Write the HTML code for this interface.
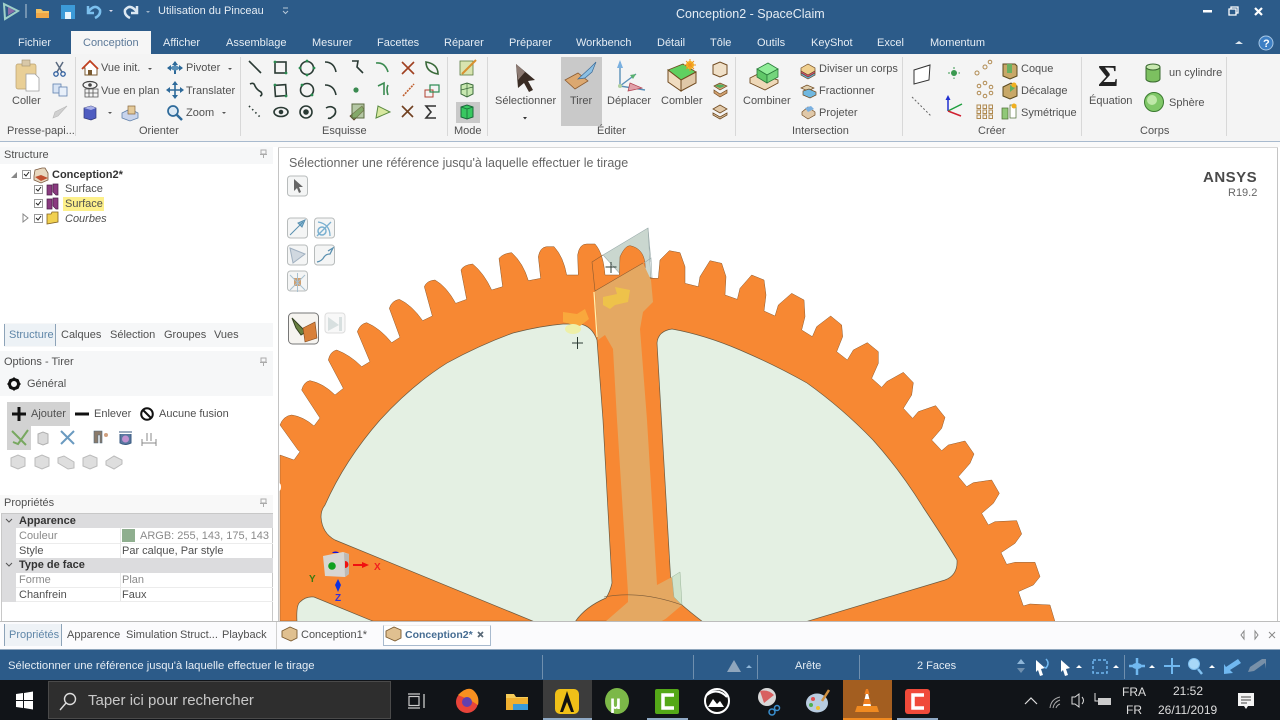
<!DOCTYPE html>
<html lang="fr"><head><meta charset="utf-8"><title>Conception2 - SpaceClaim</title>
<style>
html,body{margin:0;padding:0;background:#fff}
#r{position:relative;width:1280px;height:720px;overflow:hidden;background:#fff;font:11px/14px "Liberation Sans",sans-serif;color:#505050;filter:blur(.35px)}
#r div{position:absolute}
.t{position:absolute;white-space:nowrap;line-height:14px}
.w{color:#e6edf4}
.g{color:#8a8a8a}
.k{color:#333}
svg{position:absolute;left:0;top:0}
</style></head><body><div id="r">
<div style="left:0;top:0;width:1280px;height:54px;background:#2c5b89"></div>
<div style="left:71px;top:31px;width:80px;height:23px;background:#f6f6f6"></div>
<div style="left:0;top:54px;width:1280px;height:87px;background:#f4f4f4"></div>
<div style="left:0;top:141px;width:1280px;height:1px;background:#a8bace"></div>
<div style="left:0;top:142px;width:1280px;height:5px;background:#fafafa"></div>
<div style="left:561px;top:57px;width:41px;height:69px;background:#c9c9c9"></div>
<div style="left:456px;top:102px;width:24px;height:21px;background:#c9c9c9"></div>
<div style="left:75px;top:57px;width:1px;height:79px;background:#d8d8d8"></div>
<div style="left:240px;top:57px;width:1px;height:79px;background:#d8d8d8"></div>
<div style="left:447px;top:57px;width:1px;height:79px;background:#d8d8d8"></div>
<div style="left:487px;top:57px;width:1px;height:79px;background:#d8d8d8"></div>
<div style="left:735px;top:57px;width:1px;height:79px;background:#d8d8d8"></div>
<div style="left:902px;top:57px;width:1px;height:79px;background:#d8d8d8"></div>
<div style="left:1081px;top:57px;width:1px;height:79px;background:#d8d8d8"></div>
<div style="left:1226px;top:57px;width:1px;height:79px;background:#d8d8d8"></div>

<span class="t w" style="left:158px;top:4px">Utilisation du Pinceau</span>
<span class="t w" style="left:676px;top:7px;font-size:12.5px">Conception2 - SpaceClaim</span>
<span class="t w" style="left:18px;top:36px">Fichier</span>
<span class="t" style="left:83px;top:36px;color:#5d7a99">Conception</span>
<span class="t w" style="left:163px;top:36px">Afficher</span>
<span class="t w" style="left:226px;top:36px">Assemblage</span>
<span class="t w" style="left:312px;top:36px">Mesurer</span>
<span class="t w" style="left:377px;top:36px">Facettes</span>
<span class="t w" style="left:444px;top:36px">Réparer</span>
<span class="t w" style="left:509px;top:36px">Préparer</span>
<span class="t w" style="left:576px;top:36px">Workbench</span>
<span class="t w" style="left:657px;top:36px">Détail</span>
<span class="t w" style="left:710px;top:36px">Tôle</span>
<span class="t w" style="left:757px;top:36px">Outils</span>
<span class="t w" style="left:811px;top:36px">KeyShot</span>
<span class="t w" style="left:877px;top:36px">Excel</span>
<span class="t w" style="left:930px;top:36px">Momentum</span>

<span class="t" style="left:12px;top:94px">Coller</span>
<span class="t" style="left:101px;top:61px">Vue init.</span>
<span class="t" style="left:101px;top:84px">Vue en plan</span>
<span class="t" style="left:186px;top:61px">Pivoter</span>
<span class="t" style="left:186px;top:84px">Translater</span>
<span class="t" style="left:186px;top:106px">Zoom</span>
<span class="t" style="left:7px;top:124px">Presse-papi...</span>
<span class="t" style="left:139px;top:124px">Orienter</span>
<span class="t" style="left:322px;top:124px">Esquisse</span>
<span class="t" style="left:454px;top:124px">Mode</span>
<span class="t" style="left:495px;top:94px">Sélectionner</span>
<span class="t" style="left:570px;top:94px">Tirer</span>
<span class="t" style="left:607px;top:94px">Déplacer</span>
<span class="t" style="left:661px;top:94px">Combler</span>
<span class="t" style="left:597px;top:124px">Éditer</span>
<span class="t" style="left:743px;top:94px">Combiner</span>
<span class="t" style="left:819px;top:62px">Diviser un corps</span>
<span class="t" style="left:819px;top:84px">Fractionner</span>
<span class="t" style="left:819px;top:106px">Projeter</span>
<span class="t" style="left:792px;top:124px">Intersection</span>
<span class="t" style="left:1021px;top:62px">Coque</span>
<span class="t" style="left:1021px;top:84px">Décalage</span>
<span class="t" style="left:1021px;top:106px">Symétrique</span>
<span class="t" style="left:978px;top:124px">Créer</span>
<span class="t" style="left:1089px;top:94px">Équation</span>
<span class="t" style="left:1169px;top:66px">un cylindre</span>
<span class="t" style="left:1169px;top:96px">Sphère</span>
<span class="t" style="left:1140px;top:124px">Corps</span>

<!-- left panel -->
<div style="left:0;top:147px;width:273px;height:17px;background:#f6f7f8"></div>
<span class="t" style="left:4px;top:148px">Structure</span>
<span class="t k" style="left:52px;top:168px;font-weight:bold">Conception2*</span>
<div style="left:63px;top:197px;width:41px;height:14px;background:#fdf08a"></div>
<span class="t" style="left:65px;top:182px">Surface</span>
<span class="t" style="left:65px;top:197px">Surface</span>
<span class="t" style="left:65px;top:212px;font-style:italic">Courbes</span>
<div style="left:4px;top:323px;width:269px;height:24px;background:#f6f7f8"></div>
<div style="left:4px;top:324px;width:52px;height:22px;background:#edf2f6;border-left:1px solid #8da3b8;border-right:1px solid #8da3b8;box-sizing:border-box"></div>
<span class="t" style="left:9px;top:328px;color:#5f86a8">Structure</span>
<span class="t" style="left:61px;top:328px">Calques</span>
<span class="t" style="left:110px;top:328px">Sélection</span>
<span class="t" style="left:164px;top:328px">Groupes</span>
<span class="t" style="left:214px;top:328px">Vues</span>
<div style="left:0;top:351px;width:273px;height:45px;background:#f6f7f8"></div>
<span class="t" style="left:4px;top:355px">Options - Tirer</span>
<span class="t" style="left:27px;top:377px">Général</span>
<div style="left:7px;top:402px;width:63px;height:24px;background:#d2d2d2"></div>
<div style="left:7px;top:426px;width:24px;height:24px;background:#d2d2d2"></div>
<span class="t" style="left:31px;top:407px">Ajouter</span>
<span class="t" style="left:94px;top:407px">Enlever</span>
<span class="t" style="left:159px;top:407px">Aucune fusion</span>

<!-- props -->
<div style="left:0;top:495px;width:273px;height:18px;background:#f8f8f8"></div>
<span class="t" style="left:4px;top:496px">Propriétés</span>
<div style="left:1px;top:513px;width:272px;height:110px;border:1px solid #c8c8c8;box-sizing:border-box;background:#fff"></div>
<div style="left:2px;top:514px;width:271px;height:14px;background:#dcdcde"></div>
<div style="left:2px;top:528px;width:14px;height:44px;background:#dcdcde"></div>
<div style="left:2px;top:558px;width:271px;height:15px;background:#dcdcde"></div>
<div style="left:2px;top:573px;width:14px;height:29px;background:#dcdcde"></div>
<div style="left:120px;top:528px;width:1px;height:30px;background:#e8e8e8"></div>
<div style="left:120px;top:573px;width:1px;height:29px;background:#e8e8e8"></div>
<div style="left:16px;top:543px;width:257px;height:1px;background:#ececec"></div>
<div style="left:16px;top:587px;width:257px;height:1px;background:#ececec"></div>
<div style="left:16px;top:601px;width:257px;height:1px;background:#ececec"></div>
<div style="left:122px;top:529px;width:13px;height:13px;background:#8faf8f"></div>
<span class="t k" style="left:19px;top:514px;font-weight:bold">Apparence</span>
<span class="t g" style="left:19px;top:529px">Couleur</span>
<span class="t g" style="left:140px;top:529px">ARGB: 255, 143, 175, 143</span>
<span class="t" style="left:19px;top:544px">Style</span>
<span class="t" style="left:122px;top:544px">Par calque, Par style</span>
<span class="t k" style="left:19px;top:558px;font-weight:bold">Type de face</span>
<span class="t g" style="left:19px;top:573px">Forme</span>
<span class="t g" style="left:122px;top:573px">Plan</span>
<span class="t" style="left:19px;top:588px">Chanfrein</span>
<span class="t" style="left:122px;top:588px">Faux</span>

<!-- viewport -->
<div style="left:278px;top:147px;width:1px;height:474px;background:#c4c4c4"></div>
<div style="left:1277px;top:147px;width:1px;height:474px;background:#c4c4c4"></div>
<div style="left:278px;top:147px;width:1000px;height:1px;background:#d8d8d8"></div>
<div style="left:279px;top:148px;width:998px;height:473px;overflow:hidden;background:#fff">
<svg width="998" height="473" viewBox="279 148 998 473">
<polygon points="603,255 648,228 651,280 622,276" fill="#cad7cf" stroke="#9aa" stroke-width=".6"/>
<g transform="translate(280,220) scale(.33333)" fill="#f78833" stroke="#8a5a30" stroke-width="1.5" stroke-linejoin="round">
<path d="M0,705 L42,720 L60,695 L54,690 L0,615 Q10,588 35,585 Q70,590 102,618 L120,594 L114,585 L65,510 Q72,485 90,482 Q130,490 165,525 L190,505 L145,420 Q150,395 170,390 Q210,405 245,440 L270,425 L232,335 Q240,312 260,308 Q300,325 335,368 L360,352 L328,265 Q335,242 358,238 Q395,255 428,302 L457,288 L433,200 Q440,182 465,180 Q500,200 527,250 L560,238 L543,150 Q550,135 578,132 Q612,160 635,210 L668,200 L657,115 Q670,100 695,98 Q730,130 745,182 L782,175 L775,110 Q780,82 800,80 L822,80 Q850,110 860,165 L895,165 L893,105 Q898,72 920,72 L945,72 Q970,100 975,165 L1018,165 L1020,110 Q1035,77 1050,77 Q1090,85 1095,130 L1097,170 L1135,178 L1135,1203 L0,1203 Z"/>
</g>
<g transform="translate(640,230) scale(.33333)" fill="#f78833" stroke="#8a5a30" stroke-width="1.5" stroke-linejoin="round">
<path d="M0,145 L55,145 L60,90 L88,62 L120,68 L135,110 L135,160 L175,170 L180,140 L210,92 L245,100 L258,140 L255,195 L292,208 L300,175 L335,135 L372,150 L378,195 L372,243 L405,258 L415,225 L455,190 L492,210 L495,260 L485,300 L517,320 L530,290 L572,258 L605,285 L608,320 L590,365 L622,390 L640,360 L682,338 L715,365 L715,400 L695,445 L725,472 L740,455 L790,427 L820,458 L815,495 L790,535 L818,565 L835,545 L887,527 L915,562 L905,595 L875,630 L905,662 L925,645 L975,633 L1002,672 L990,700 L955,740 L980,770 L1000,758 L1055,750 L1078,790 L1060,820 L1025,850 L1045,885 L1065,875 L1130,872 L1145,912 L1125,940 L1083,968 L1100,1003 L1125,997 L1185,997 L1200,1040 L1180,1065 L1135,1085 L1150,1128 L1170,1122 L1230,1125 L1245,1175 L0,1175 Z"/>
</g>
<rect x="630" y="290" width="40" height="331" fill="#f78833"/>
<ellipse cx="279" cy="487" rx="2" ry="4" fill="#fff"/>
<g fill="#e4f0e3" stroke="#6b5a40" stroke-width=".7">
<path d="M597,340 L603,420 L612,583 Q610,592 606,598 Q585,607 575,622 L535,622 L335,540 Q322,533 321,517 Q321,510 325,505 Q345,460 380,420 Q412,385 447,363 Q480,345 513,333 Q540,326 563,324 L580,324 Q592,326 597,340 Z"/>
<path d="M657,343 Q658,331 672,329 Q705,335 740,350 Q775,365 807,383 Q842,408 873,440 Q900,470 923,507 Q945,540 957,560 Q958,575 945,580 L805,622 L703,622 Q690,612 682,605 Q672,597 671,585 Z"/>
<path d="M297,622 Q296,605 300,602 Q306,596 314,597 L375,622 Z"/>
</g>
<polygon points="595,291 643,263 651,280 653,302 643,312 640,329 647,420 657,585 672,577 682,605 662,622 605,622 628,602 628,593 617,420 613,349 605,335 598,340" fill="#e4a862"/>
<polygon points="672,577 680,572 682,605 674,597" fill="#cfe3cb" stroke="#9ab49a" stroke-width=".5"/>
<polygon points="660,622 682,610 682,622" fill="#f78833"/>
<path d="M603,255 L592,262 L595,291 L643,263" fill="none" stroke="#8a5a30" stroke-width=".6"/>
<path d="M648,228 L651,262 M644,263 L651,258 L652,278" fill="none" stroke="#9aa" stroke-width=".6"/>
<path d="M594,292 L597,337" stroke="#fff2b0" stroke-width="1.2"/>
<path d="M604,597 Q640,590 682,605" fill="none" stroke="#7a5a38" stroke-width=".6"/>
<polygon points="603,297 617,294 615,287 630,290 628,302 615,305 610,309 603,305" fill="#eec24a"/>
<polygon points="563,312 577,314 585,309 589,319 580,326 570,324 563,322" fill="#f9a83c"/>
<ellipse cx="573" cy="329" rx="8" ry="5" fill="#eef0a8"/>
<path d="M611,262 V273 M605.500,267 H616.500 M577.500,337 V349 M572,343 H583" stroke="#2c3c34" stroke-width="1"/>
<!-- gizmo -->
<polygon points="323,556 343,552 349,554 349,574 345,577 325,576" fill="#d8d6d2"/>
<polygon points="344,553 349,554 349,574 345,577" fill="#bdb9b4"/>
<circle cx="332" cy="566" r="3.800" fill="#10a020"/>
<path d="M332,553 a4,3 0 0 1 7,0 Z" fill="#1010e0"/>
<path d="M345,561 a3.500,3.500 0 0 1 0,7 Z" fill="#f01010"/>
<path d="M353,564 H362 V562 L369,565 L362,568 V566 H353 Z" fill="#f01010"/>
<path d="M338,579 L341,585 L338,592 L335,585 Z" fill="#1030e0"/>
<text x="374" y="570" font-family="Liberation Sans" font-weight="bold" font-size="10" fill="#f02020">X</text>
<text x="309" y="582" font-family="Liberation Sans" font-weight="bold" font-size="10" fill="#3a7a10">Y</text>
<text x="335" y="601" font-family="Liberation Sans" font-weight="bold" font-size="10" fill="#3030e0">Z</text>
</svg>
</div>
<span class="t" style="left:289px;top:156px;font-size:12.500px;color:#666">Sélectionner une référence jusqu'à laquelle effectuer le tirage</span>
<span class="t" style="left:1203px;top:171px;font-size:15px;font-weight:bold;letter-spacing:.5px;color:#4a4a4a">ANSYS</span>
<span class="t" style="left:1228px;top:186px;font-size:11px;color:#666">R19.2</span>

<!-- bottom tabs -->
<div style="left:0;top:621px;width:1280px;height:28px;background:#fbfbfd"></div>
<div style="left:0;top:621px;width:1280px;height:1px;background:#bdbdbd"></div>
<div style="left:4px;top:624px;width:58px;height:22px;background:#eef2f6;border-left:1px solid #8da3b8;border-right:1px solid #8da3b8;box-sizing:border-box"></div>
<span class="t" style="left:9px;top:628px;color:#5f86a8">Propriétés</span>
<span class="t" style="left:67px;top:628px">Apparence</span>
<span class="t" style="left:126px;top:628px">Simulation</span>
<span class="t" style="left:180px;top:628px">Struct...</span>
<span class="t" style="left:222px;top:628px">Playback</span>
<div style="left:276px;top:622px;width:1px;height:27px;background:#d0d0d0"></div>
<div style="left:383px;top:625px;width:108px;height:21px;background:#fff;border:1px solid #a8bace;border-top:1px solid #eee;box-sizing:border-box"></div>
<span class="t" style="left:301px;top:628px">Conception1*</span>
<span class="t" style="left:405px;top:628px;color:#456c92;font-weight:bold;font-size:10.500px">Conception2*</span>

<!-- status -->
<div style="left:0;top:649px;width:1280px;height:31px;background:#2c5b89"></div>
<div style="left:0;top:649px;width:1280px;height:1px;background:#8fa6bd"></div>
<span class="t w" style="left:8px;top:659px;font-size:11.300px">Sélectionner une référence jusqu'à laquelle effectuer le tirage</span>
<span class="t w" style="left:795px;top:659px">Arête</span>
<span class="t w" style="left:917px;top:659px">2 Faces</span>
<div style="left:542px;top:655px;width:1px;height:24px;background:#6f8fae"></div>
<div style="left:693px;top:655px;width:1px;height:24px;background:#6f8fae"></div>
<div style="left:757px;top:655px;width:1px;height:24px;background:#6f8fae"></div>
<div style="left:859px;top:655px;width:1px;height:24px;background:#6f8fae"></div>
<div style="left:1124px;top:655px;width:1px;height:24px;background:#6f8fae"></div>

<!-- taskbar -->
<div style="left:0;top:680px;width:1280px;height:40px;background:#111418"></div>
<div style="left:48px;top:681px;width:343px;height:38px;background:#2e2e2e;border:1px solid #4a4a4a;box-sizing:border-box"></div>
<div style="left:543px;top:680px;width:49px;height:40px;background:#3c3c3c"></div>
<div style="left:843px;top:680px;width:49px;height:40px;background:#a35e20"></div>
<div style="left:543px;top:718px;width:49px;height:2px;background:#8fa9c4"></div>
<div style="left:647px;top:718px;width:41px;height:2px;background:#8fa9c4"></div>
<div style="left:843px;top:718px;width:49px;height:2px;background:#f08a20"></div>
<div style="left:897px;top:718px;width:41px;height:2px;background:#8fa9c4"></div>
<span class="t" style="left:88px;top:694px;font-size:15px;color:#c8c8c8">Taper ici pour rechercher</span>
<span class="t" style="left:1122px;top:685px;font-size:12px;color:#ddd">FRA</span>
<span class="t" style="left:1126px;top:703px;font-size:12px;color:#ddd">FR</span>
<span class="t" style="left:1173px;top:684px;font-size:12px;color:#ddd">21:52</span>
<span class="t" style="left:1158px;top:703px;font-size:12px;color:#ddd">26/11/2019</span>

<svg width="1280" height="720" viewBox="0 0 1280 720">
<!-- quick access -->
<path d="M4,4 L18,11 L5,19 Z" fill="none" stroke="#9fd0c8" stroke-width="2"/><path d="M8,7 L15,11 L8,15 Z" fill="#8a6aa8"/>
<path d="M26,4 V18" stroke="#b8c8d8"/>
<path d="M36,9 h5 l2,2 h6 v2 h-13 Z" fill="#f3c060"/><path d="M36,13 h13 v5 h-13 Z" fill="#f0a848"/>
<rect x="61" y="5" width="14" height="14" fill="#3c9ad8"/><rect x="65" y="12" width="6" height="7" fill="#e8f4fc"/>
<path d="M88,6 V13 H94 M88,12 Q95,3 100,10 Q101,15 95,18" fill="none" stroke="#7cc0ee" stroke-width="2.500"/>
<path d="M109,10 l4,0 l-2,2 Z" fill="#dde"/>
<path d="M137,6 V13 H131 M137,12 Q130,3 125,10 Q124,15 130,18" fill="none" stroke="#dce8f2" stroke-width="2.500"/>
<path d="M146,11 l4,0 l-2,2 Z" fill="#9fb4c8"/>
<path d="M283,8 h5 M283,11 l2.500,2.500 l2.500,-2.500" fill="none" stroke="#b8c8d8"/>
<!-- window -->
<rect x="1203" y="10" width="9" height="2.500" fill="#fff"/>
<path d="M1229,9 h7 v6 h-7 Z M1231,9 v-2 h7 v6 h-2" fill="none" stroke="#fff" stroke-width="1.300"/>
<path d="M1255,8 l7,7 m0,-7 l-7,7" stroke="#fff" stroke-width="2.200"/>
<path d="M1235,44 l4,-3 l4,3 Z" fill="#dde6ee"/>
<circle cx="1266" cy="43" r="7" fill="#3d7fc4" stroke="#a8c8e6"/>
<text x="1263" y="47" font-family="Liberation Sans" font-weight="bold" font-size="11" fill="#fff">?</text>
<!-- coller -->
<rect x="16" y="64" width="20" height="25" rx="2" fill="#e9cf96" stroke="#b8a070" stroke-width=".7"/>
<rect x="22" y="60" width="8" height="6" fill="#d8c8a8" stroke="#a09070" stroke-width=".6"/>
<path d="M26,74 h9 l4,4 v13 h-13 Z" fill="#fff" stroke="#a0a0a0" stroke-width=".8"/>
<path d="M56,62 L62,72 M63,62 L57,72" stroke="#5a6a80" stroke-width="1.500"/><circle cx="56" cy="74" r="2.200" fill="none" stroke="#3060a0" stroke-width="1.300"/><circle cx="63" cy="74" r="2.200" fill="none" stroke="#3060a0" stroke-width="1.300"/>
<rect x="53" y="84" width="8" height="9" fill="#d8e4f4" stroke="#6080b0" stroke-width=".8"/><rect x="59" y="87" width="8" height="9" fill="#e8f0fa" stroke="#6080b0" stroke-width=".8"/>
<path d="M67,106 L58,116 L53,118 L55,112 Z" fill="#d0d0d0" stroke="#b8b8b8" stroke-width=".6"/>
<!-- orienter -->
<path d="M83,68 L90,61 L97,68 V75 H85 V68 Z" fill="#fff" stroke="#7a5a30" stroke-width="1"/><path d="M82,69 L90,61 L98,69" fill="none" stroke="#c04020" stroke-width="1.800"/><rect x="88" y="70" width="4" height="5" fill="#7a5a30"/>
<path d="M148,68 l4,0 l-2,2 Z M228,68 l4,0 l-2,2 Z" fill="#555"/>
<ellipse cx="90" cy="85" rx="7" ry="3.500" fill="none" stroke="#444" stroke-width="1.200"/><circle cx="90" cy="85" r="1.800" fill="#444"/>
<path d="M85,89 h13 v8 h-13 Z M85,93 h13 M89,89 v8 M93,89 v8" fill="none" stroke="#555" stroke-width=".8"/>
<path d="M84,108 l7,-2 l5,2 v10 l-5,2 l-7,-2 Z" fill="#4e5cc0" stroke="#303878" stroke-width=".7"/><path d="M84,108 l7,2 l5,-2 l-5,-2 Z" fill="#a8b0e8"/>
<path d="M108,112 l4,0 l-2,2 Z M222,112 l4,0 l-2,2 Z" fill="#555"/>
<path d="M122,113 l8,-4 l8,4 v5 l-8,3 l-8,-3 Z" fill="#c8d4ec" stroke="#6080a8" stroke-width=".8"/><path d="M128,106 h7 v8 h-7 Z" fill="#e4ca9a" stroke="#8a6a40" stroke-width=".7"/>
<g fill="none" stroke="#2e6a9a" stroke-width="2"><path d="M168,68 H182 M175,62 V74"/></g><path d="M167,68 l4,-3 v6 Z M183,68 l-4,-3 v6 Z M175,61 l-3,4 h6 Z" fill="#2e6a9a"/><ellipse cx="175" cy="68" rx="4" ry="2.500" fill="#5a90b8"/>
<g fill="none" stroke="#2e6a9a" stroke-width="1.600"><path d="M168,90 H182 M175,83 V97"/></g><path d="M166,90 l4,-3 v6 Z M184,90 l-4,-3 v6 Z M175,81 l-3,4 h6 Z M175,99 l-3,-4 h6 Z" fill="#2e6a9a"/>
<circle cx="173" cy="111" r="5" fill="#dbe9f5" stroke="#2e6a9a" stroke-width="1.700"/><path d="M177,115 L182,120" stroke="#2e6a9a" stroke-width="2.500"/>
<!-- esquisse grid -->
<g fill="none" stroke="#2a3a34" stroke-width="1.600">
<path d="M249,61 L261,73"/><rect x="275" y="62" width="11" height="11"/><circle cx="307" cy="68" r="6.500"/><path d="M325,62 q9,0 11,10"/><path d="M352,61 h6 l-1,6 l6,6"/><path d="M376,63 q9,-1 12,9" stroke="#3a8a50"/><path d="M402,62 l12,12 M414,62 l-12,12" stroke="#a04020"/><path d="M426,62 q12,2 12,12 q-12,-2 -12,-12 Z" stroke="#3a6a3a"/>
<path d="M250,84 q4,-2 5,2 q2,4 6,6 q2,3 -1,4"/><rect x="275" y="85" width="11" height="11" transform="rotate(-4 280 90)"/><circle cx="307" cy="90" r="6.500"/><path d="M325,85 q9,0 11,10"/><path d="M378,86 l6,-3 v12 M388,85 q-2,4 0,10" stroke="#3a8a50"/><path d="M403,96 L414,84" stroke="#c06030" stroke-dasharray="2 1"/><rect x="425" y="90" width="8" height="7" stroke="#b04030" stroke-width="1"/><rect x="430" y="85" width="9" height="7" stroke="#2a8a50" stroke-width="1.200"/>
<path d="M249,106 L261,118" stroke-dasharray="1.500 3"/><ellipse cx="281" cy="112" rx="7" ry="4.500"/><circle cx="281" cy="112" r="1.500" fill="#2a3a34"/><circle cx="306" cy="112" r="6"/><circle cx="306" cy="112" r="2" fill="#2a3a34"/><path d="M326,108 q5,-3 9,1 q2,5 -3,8 q-2,2 -4,1"/>
<path d="M402,106 l11,11 M413,106 l-11,11" stroke="#704020"/><path d="M436,106 h-10 l5,6 l-5,6 h10" stroke="#333"/>
</g>
<circle cx="356" cy="90" r="2.600" fill="#3a8a50"/>
<path d="M350,116 L362,106 L364,110 L354,120 Z" fill="#7aa860" stroke="#5a3a20" stroke-width=".8"/><path d="M352,104 h12 v14 h-12 Z" fill="#8aaa70" fill-opacity=".6" stroke="#5a6a40"/>
<path d="M376,118 L390,112 L378,106 Z" fill="#d8e8a0" stroke="#5a8a40"/>
<g fill="#2a8a50"><circle cx="307" cy="61" r="1.400"/><circle cx="307" cy="75" r="1.400"/><circle cx="300" cy="68" r="1.400"/><circle cx="314" cy="68" r="1.400"/><circle cx="302" cy="85" r="1.400"/><circle cx="312" cy="95" r="1.400"/><circle cx="275" cy="62" r="1.400"/><circle cx="286" cy="73" r="1.400"/><circle cx="275" cy="85" r="1.400"/><circle cx="286" cy="96" r="1.400"/></g>
<!-- mode -->
<rect x="460" y="61" width="13" height="14" fill="#d8e4b0" stroke="#5a7a40" stroke-width=".8"/><path d="M462,74 L476,60" stroke="#d89030" stroke-width="2"/>
<path d="M461,85 l6,-2 l6,2 v9 l-6,3 l-6,-3 Z" fill="#c8e8b0" stroke="#3a6a3a" stroke-width="1"/><path d="M467,83 v14 M461,90 l12,-3" stroke="#3a6a3a" stroke-width=".7"/>
<path d="M461,107 l6,-2 l6,2 v10 l-6,2 l-6,-2 Z" fill="#38c860" stroke="#1a6a3a" stroke-width="1"/><path d="M461,107 l6,2 l6,-2 M467,109 v10" fill="none" stroke="#1a6a3a" stroke-width=".8"/>
<!-- select -->
<path d="M516,64 L535,80 L528,81 L533,90 L529,92 L524,83 L518,88 Z" fill="#3a2c24"/><path d="M516,64 L525,72 L518,80 Z" fill="#8c7a72"/>
<path d="M523,117 l4,0 l-2,2.500 Z" fill="#333"/>
<!-- tirer -->
<path d="M565,80 L578,73 L588,81 L575,89 Z" fill="#dca870" stroke="#8a5a30" stroke-width=".8"/>
<path d="M578,79 L590,68 L596,62 L592,72 L585,78 Z" fill="#8cc0e4" stroke="#3a6a98" stroke-width=".7"/>
<!-- deplacer -->
<path d="M620,62 V86 M620,86 L645,90 M620,86 L636,74" fill="none" stroke="#5a90b8" stroke-width="1.400"/><path d="M620,60 l-3,8 h6 Z" fill="#7ab0e0"/><path d="M636,74 l-6,1 l3,4 Z" fill="#5ab070"/><path d="M630,83 L642,88 L628,91 Z" fill="#e0a0a8" stroke="#b04050" stroke-width=".7"/><circle cx="620" cy="86" r="2" fill="#b0d0a0"/>
<!-- combler -->
<path d="M668,70 L683,64 L696,72 L681,80 Z" fill="#60d060" stroke="#704a20" stroke-width=".8"/><path d="M668,70 L681,80 V91 L668,82 Z" fill="#f0dcc0" stroke="#704a20"/><path d="M681,80 L696,72 V83 L681,91 Z" fill="#e0c8a8" stroke="#704a20"/>
<circle cx="690" cy="65" r="4" fill="#f8c020"/><path d="M690,59 v12 M684,65 h12 M686,61 l8,8 M694,61 l-8,8" stroke="#f09020"/>
<path d="M713,65 l7,-3 l7,3 v9 l-7,3 l-7,-3 Z" fill="#f0e0c8" stroke="#704a20"/><path d="M714,86 l6,-3 l7,3 l-7,4 Z M714,90 l6,4 l7,-4 v3 l-7,4 l-6,-4 Z" fill="#d0a070" stroke="#704a20" stroke-width=".7"/><path d="M715,86 q5,-3 10,0 l-5,2 Z" fill="#50b060"/><path d="M713,109 l7,-4 l7,4 l-7,4 Z M713,113 l7,4 l7,-4 v2 l-7,4 l-7,-4 Z" fill="#e0c8a8" stroke="#704a20" stroke-width=".8"/>
<!-- combiner -->
<path d="M750,78 L758,74 L778,80 V83 L765,90 L750,83 Z" fill="#eed8b8" stroke="#704a20" stroke-width=".9"/>
<path d="M757,69 L768,63 L778,69 L767,75 Z" fill="#90ec98" stroke="#2a7a3a" stroke-width=".8"/><path d="M757,69 V77 L767,83 V75 Z" fill="#60c868" stroke="#2a7a3a" stroke-width=".8"/><path d="M767,75 V83 L778,77 V69 Z" fill="#74d47c" stroke="#2a7a3a" stroke-width=".8"/>
<g stroke="#704a20" stroke-width=".7"><path d="M801,68 l7,-4 l7,4 v3 l-7,4 l-7,-4 Z" fill="#f0d090"/><path d="M801,71 l7,4 l7,-4 v2 l-7,4 l-7,-4 Z" fill="#d05080"/><path d="M801,73 l7,4 l7,-4 v2 l-7,4 l-7,-4 Z" fill="#60b0e0"/><path d="M801,88 l6,-3 l7,3 l-6,3 Z" fill="#e0d0b0"/><path d="M803,91 l6,-2 l7,3 v3 l-6,3 l-7,-3 Z" fill="#70b8e0"/><path d="M802,112 l6,-5 l7,5 v3 l-7,4 l-6,-4 Z" fill="#e0c8a8"/></g>
<path d="M805,108 l6,-2 l3,3 l-6,3 Z" fill="#7ab0e0"/>
<!-- creer -->
<path d="M914,70 L930,65 L929,80 L914,84 Z" fill="#fff" stroke="#333" stroke-width="1"/>
<circle cx="954" cy="73" r="3" fill="#3a9a50"/><path d="M954,67 v12 M948,73 h12" stroke="#3a9a50" stroke-dasharray="2 1.500"/>
<path d="M912,97 L931,116" stroke="#666" stroke-dasharray="2 2"/>
<path d="M948,111 V98" stroke="#2030d0" stroke-width="1.500"/><path d="M948,95 l-2.500,5 h5 Z" fill="#2030d0"/><path d="M948,111 L962,104" stroke="#20a040" stroke-width="1.500"/><path d="M948,111 L961,116" stroke="#d02030" stroke-width="1.500"/>
<g fill="none" stroke="#b08a50" stroke-width="1"><circle cx="977" cy="73" r="2"/><circle cx="985" cy="67" r="2"/><circle cx="990" cy="62" r="1.800"/><circle cx="979" cy="86" r="1.800"/><circle cx="985" cy="83" r="1.800"/><circle cx="991" cy="87" r="1.800"/><circle cx="979" cy="93" r="1.800"/><circle cx="991" cy="93" r="1.800"/><circle cx="985" cy="96" r="1.800"/>
<rect x="977" y="105" width="3.500" height="3.500"/><rect x="983" y="105" width="3.500" height="3.500"/><rect x="989" y="105" width="3.500" height="3.500"/><rect x="977" y="110" width="3.500" height="3.500"/><rect x="983" y="110" width="3.500" height="3.500"/><rect x="989" y="110" width="3.500" height="3.500"/><rect x="977" y="115" width="3.500" height="3.500"/><rect x="983" y="115" width="3.500" height="3.500"/><rect x="989" y="115" width="3.500" height="3.500"/></g>
<path d="M1003,64 h12 l2,2 v10 l-7,3 l-7,-3 Z" fill="#c8a868" stroke="#5a4a20"/><rect x="1007" y="64" width="5" height="9" fill="#6ab060"/>
<path d="M1003,87 l8,-4 l6,3 v10 l-7,3 l-7,-3 Z" fill="#c8a868" stroke="#5a4a20"/><path d="M1010,85 l5,3 l-5,4 Z" fill="#60b060"/><circle cx="1014" cy="85" r="2.500" fill="#f0b020"/>
<rect x="1002" y="108" width="6" height="11" fill="#90c878" stroke="#4a6a30" stroke-width=".7"/><rect x="1010" y="105" width="6" height="13" fill="#fff" stroke="#4a6a30" stroke-width=".7"/><circle cx="1014" cy="106" r="2.500" fill="#f0b020"/>
<!-- corps -->
<text x="1098" y="86" font-family="Liberation Serif" font-weight="bold" font-size="31" fill="#222">Σ</text>
<path d="M1146,67 V79 a7,3 0 0 0 14,0 V67" fill="#7cc060" stroke="#3a6a30"/><ellipse cx="1153" cy="67" rx="7" ry="3" fill="#c8e8b0" stroke="#3a6a30"/>
<circle cx="1154" cy="102" r="9.500" fill="#80c868" stroke="#3a7a30"/><circle cx="1152" cy="100" r="5" fill="#bfe8a8"/>

<!-- viewport tools -->
<g fill="#f4f5f5" stroke="#b8bcbc"><rect x="287.500" y="176" width="20" height="20" rx="3"/><rect x="287.500" y="218" width="20" height="20" rx="3"/><rect x="314.500" y="218" width="20" height="20" rx="3"/><rect x="287.500" y="245" width="20" height="20" rx="3"/><rect x="314.500" y="245" width="20" height="20" rx="3"/><rect x="287.500" y="271" width="20" height="20" rx="3"/><rect x="288.500" y="313" width="30" height="31" rx="4" fill="#f6f4f0" stroke="#777"/><rect x="325" y="313" width="20" height="20" rx="3" fill="#f8f8f8" stroke="#ddd"/></g>
<path d="M294,179 L303,187 L299,187 L301,192 L299,193 L297,188 L294,191 Z" fill="#666"/>
<path d="M290,235 L303,222 M305,220 l-7,3 l4,4 Z" stroke="#5a90b0" fill="#88bcd8"/>
<circle cx="322" cy="231" r="4" fill="none" stroke="#7ab0d0" stroke-width="1.500"/><path d="M317,236 L331,222 M318,222 q12,2 12,14" fill="none" stroke="#7ab0d0" stroke-width="1.300"/>
<path d="M290,248 L305,254 L293,263 Z" fill="#d0d8e0" stroke="#a0b0c0"/>
<path d="M317,262 q5,-1 7,-5 q2,-3 6,-3 l3,-6 l-5,3" fill="none" stroke="#5a90b0" stroke-width="1.300"/>
<rect x="294" y="278" width="7" height="8" fill="#d0a070"/><path d="M290,275 L305,290 M305,275 L290,290 M297.500,273 V292" stroke="#a8c0d0"/>
<path d="M292,318 L306,332 L301,335 L296,328 Z" fill="#6a8040" stroke="#334020"/><path d="M303,328 L315,322 L317,338 L305,342 Z" fill="#d8803a" stroke="#804a20" stroke-width=".6"/>
<path d="M328,317 L339,325 L328,331 Z M339,317 h3 v14 h-3 Z" fill="#d8e0e0"/>

<!-- tree -->
<path d="M11,178 L17,172 V178 Z" fill="#888"/>
<path d="M23,214 L28,218 L23,222 Z" fill="none" stroke="#888"/>
<g fill="#fff" stroke="#999"><rect x="22.500" y="170.500" width="8" height="8"/><rect x="34.500" y="185.500" width="8" height="8"/><rect x="34.500" y="199.500" width="8" height="8"/><rect x="34.500" y="214.500" width="8" height="8"/></g>
<g fill="none" stroke="#222" stroke-width="1"><path d="M24,174 l2,2 l3,-4 M36,189 l2,2 l3,-4 M36,203 l2,2 l3,-4 M36,218 l2,2 l3,-4"/></g>
<path d="M35,170 l7,-2 h3 l3,5 v7 l-7,3 l-7,-3 v-4 Z" fill="#e8d8c0" stroke="#7a5a40" stroke-width=".8"/><path d="M35,177 l6,-2 l7,3 l-7,3 Z" fill="#c05030"/>
<path d="M47,185 h5 v10 h-5 Z M53,184 h5 v11 h-2 l-3,-3 Z" fill="#8a3a80" stroke="#4a2048" stroke-width=".7"/>
<path d="M47,199 h5 v10 h-5 Z M53,198 h5 v11 h-2 l-3,-3 Z" fill="#8a3a80" stroke="#4a2048" stroke-width=".7"/>
<path d="M47,214 h4 l1,-2 h6 v10 l-11,2 Z" fill="#f0d050" stroke="#806020" stroke-width=".8"/>
<g fill="none" stroke="#aaa"><path d="M261,150 h5 v4 h-5 Z M263.500,154 v4 M260,154.500 h7 M261,358 h5 v4 h-5 Z M263.500,362 v4 M260,362.500 h7 M261,499 h5 v4 h-5 Z M263.500,503 v4 M260,503.500 h7"/></g>
<!-- options icons -->
<circle cx="14" cy="384" r="4.500" fill="none" stroke="#111" stroke-width="3"/><g stroke="#111" stroke-width="2"><path d="M14,377.500 v2 M14,388.500 v2 M7.500,384 h2 M18.500,384 h2 M9.500,379.500 l1.500,1.500 M17,387 l1.500,1.500 M18.500,379.500 l-1.500,1.500 M11,387 l-1.500,1.500"/></g>
<path d="M12,414 h14 M19,407 v14" stroke="#111" stroke-width="3"/>
<rect x="75" y="412.500" width="14" height="3" fill="#111"/>
<circle cx="147" cy="414" r="5.800" fill="none" stroke="#111" stroke-width="2"/><path d="M143,410 L151,418" stroke="#111" stroke-width="2"/>
<path d="M12,431 L26,445 M28,430 L18,444 L13,442" fill="none" stroke="#78a860" stroke-width="2"/>
<path d="M38,434 l5,-2 l5,2 v9 l-5,2 l-5,-2 Z" fill="#dadada" stroke="#b0b0b0"/>
<path d="M61,444 L74,431 M61,431 L74,444" stroke="#6a9ac0" stroke-width="2"/>
<path d="M94,431 h8 v12 h-2 v-8 h-2 v8 h-4 Z" fill="#8a7a6a" stroke="#506a80" stroke-width=".6"/><circle cx="106" cy="435" r="2" fill="#d0a080"/>
<path d="M119,432 h13 M120,434 v9 q5,3 11,0 v-9" fill="#5a78a0" stroke="#3a5a80"/><circle cx="125.500" cy="439" r="3.500" fill="#c090d0"/>
<path d="M142,443 h14 M142,439 v7 M156,439 v7 M147,433 v8 M151,433 v8" stroke="#888" fill="none"/>
<g fill="#dedede" stroke="#bbb"><path d="M11,458 l7,-3 l7,3 v8 l-7,3 l-7,-3 Z"/><path d="M35,458 l7,-3 l7,3 v8 l-7,3 l-7,-3 Z"/><path d="M58,458 l6,-2 l10,6 v6 l-6,1 l-10,-6 Z"/><path d="M83,458 l7,-3 l7,3 v8 l-7,3 l-7,-3 Z"/><path d="M106,461 l8,-5 l8,4 v4 l-8,5 l-8,-4 Z"/></g>
<!-- prop chevrons -->
<path d="M6,519 l3,3 l3,-3 M6,563 l3,3 l3,-3" fill="none" stroke="#555"/>
<!-- doc tab icons -->
<g stroke="#7a5a30" stroke-width=".9"><path d="M282,631 l8,-4 l7,3 v8 l-6,3 l-9,-4 Z" fill="#e0c090"/><path d="M386,631 l8,-4 l7,3 v8 l-6,3 l-9,-4 Z" fill="#e0c090"/></g>
<path d="M478,632 l5,5 m0,-5 l-5,5" stroke="#5a6a78" stroke-width="1.700"/>
<path d="M1244,631 l-3,4 l3,4 Z M1255,631 l3,4 l-3,4 Z" fill="none" stroke="#888"/>
<path d="M1269,632 l6,6 m0,-6 l-6,6" stroke="#888"/>
<!-- status icons -->
<path d="M734,660 L741,672 H727 Z" fill="#8fa6bd"/><path d="M746,668 l3,-3 l3,3 Z M1017,664 l4,-5 l4,5 Z" fill="#8fb6d8"/><path d="M1017,668 l4,5 l4,-5 Z" fill="#6f8fae"/>
<path d="M1036,660 L1045,668 L1041,669 L1043,675 L1040,676 L1038,670 L1036,672 Z" fill="#fff"/><path d="M1046,659 q4,4 0,9 l-2,-1" fill="none" stroke="#70b8f0" stroke-width="1.500"/>
<path d="M1061,660 L1070,668 L1066,669 L1068,675 L1065,676 L1063,670 L1061,672 Z" fill="#fff"/>
<path d="M1076,668 l3,-3 l3,3 Z M1113,668 l3,-3 l3,3 Z M1149,668 l3,-3 l3,3 Z M1209,668 l3,-3 l3,3 Z" fill="#fff"/>
<rect x="1093" y="660" width="14" height="13" fill="none" stroke="#70b8f0" stroke-width="1.500" stroke-dasharray="3 2"/>
<path d="M1137,658 V675 M1129,666 H1145" stroke="#70b8f0" stroke-width="2.500"/><ellipse cx="1137" cy="666" rx="5" ry="3" fill="#70b8f0"/>
<path d="M1172,658 V674 M1164,666 H1180" stroke="#70b8f0" stroke-width="2"/>
<circle cx="1194" cy="664" r="5.500" fill="#a8d8f8" stroke="#80c0f0"/><path d="M1198,669 l4,5" stroke="#80c0f0" stroke-width="2.500"/>
<path d="M1238,659 L1226,667 L1224,664 L1224,674 L1233,673 L1230,670 L1241,663 Z" fill="#70b8f0"/>
<path d="M1262,659 L1250,667 L1248,672 L1254,671 L1265,663 L1266,669 V659 Z" fill="#7890a8"/>
<!-- taskbar icons -->
<path d="M16,694 l7,-1 v7 h-7 Z M24,693 l9,-1.500 v8.500 h-9 Z M16,701 h7 v7 l-7,-1 Z M24,701 h9 v8.500 l-9,-1.500 Z" fill="#fff"/>
<circle cx="70" cy="699" r="5.500" fill="none" stroke="#ddd" stroke-width="1.400"/><path d="M66,703 L60,710" stroke="#ddd" stroke-width="1.400"/>
<path d="M408,694 h12 M408,708 h12 M424,694 v14" stroke="#ccc" fill="none" stroke-width="1.300"/><rect x="409" y="696.500" width="10" height="9" fill="none" stroke="#ccc" stroke-width="1.200"/>
<circle cx="467" cy="702" r="11" fill="#e8443a"/><path d="M458,695 Q467,686 473,690 Q480,696 478,705 L470,700 Z" fill="#f89020"/><circle cx="467" cy="702" r="5" fill="#6040b0"/>
<path d="M506,694 h8 l2,3 h12 v5 h-22 Z" fill="#f6cc58"/><path d="M506,698 h22 v12 h-22 Z" fill="#f0b030"/><rect x="513" y="704" width="15" height="6" fill="#3a9ad8"/>
<rect x="555" y="689" width="24" height="25" rx="5" fill="#f0c018"/><path d="M560,712 L567,691 L574,712 L571,712 L567,702 L563,712 Z" fill="#111"/>
<ellipse cx="617" cy="701" rx="12" ry="13" fill="#7cb848"/><text x="610" y="709" font-family="Liberation Sans" font-weight="bold" font-size="19" fill="#fff">µ</text>
<rect x="655" y="689" width="24" height="25" rx="2" fill="#54a818"/><path d="M674,695 H663 V708 H674" fill="none" stroke="#fff" stroke-width="3.500"/>
<circle cx="717" cy="701" r="12" fill="#111" stroke="#fff" stroke-width="2"/><path d="M708,707 l5,-8 l4,5 l3,-3 l4,6 Z" fill="#fff"/><path d="M707,695 q10,-8 20,2" fill="none" stroke="#fff" stroke-width="2"/>
<circle cx="767" cy="697" r="9" fill="#d8d8d8"/><path d="M760,691 q8,-2 14,4 l-10,8 Z" fill="#d86060"/><circle cx="772" cy="712" r="3" fill="none" stroke="#3a90d0" stroke-width="1.500"/><circle cx="777" cy="708" r="2.500" fill="none" stroke="#3a90d0" stroke-width="1.500"/>
<ellipse cx="817" cy="703" rx="11" ry="9.500" fill="#b8cce0"/><circle cx="813" cy="699" r="2" fill="#e05050"/><circle cx="811" cy="705" r="2" fill="#50b050"/><circle cx="818" cy="708" r="2" fill="#f0c030"/><path d="M822,701 L829,690" stroke="#d09040" stroke-width="2.500"/>
<path d="M867,689 L863,706 H871 Z" fill="#fff"/><path d="M866,689 h2 l1.500,5 h-5 Z M864.500,699 h5 l1.500,5 h-8 Z" fill="#f08020"/><path d="M857,706 h20 l2,6 h-24 Z" fill="#f08a20"/>
<rect x="905" y="689" width="25" height="25" rx="3" fill="#f04a3a"/><path d="M924,695 H913 V708 H924" fill="none" stroke="#fff" stroke-width="3.500"/>
<path d="M1025,704 l6,-6 l6,6" fill="none" stroke="#ddd" stroke-width="1.200"/>
<path d="M1050,708 q1,-9 10,-11 M1053,708 q1,-6 7,-8 M1056,708 q1,-3 4,-4" fill="none" stroke="#aaa"/>
<path d="M1072,697 h3 l4,-3 v13 l-4,-3 h-3 Z M1082,697 q3,3.500 0,7" fill="none" stroke="#ddd"/>
<rect x="1098" y="698" width="13" height="7" fill="#ccc"/><path d="M1095,693 v8 h3" fill="none" stroke="#ddd"/>
<path d="M1238,693 h16 v13 h-6 l-2,3 l-2,-3 h-6 Z" fill="#f4f4f4"/><path d="M1241,697 h10 M1241,700 h10 M1241,703 h6" stroke="#444"/>
</svg>
</div></body></html>
